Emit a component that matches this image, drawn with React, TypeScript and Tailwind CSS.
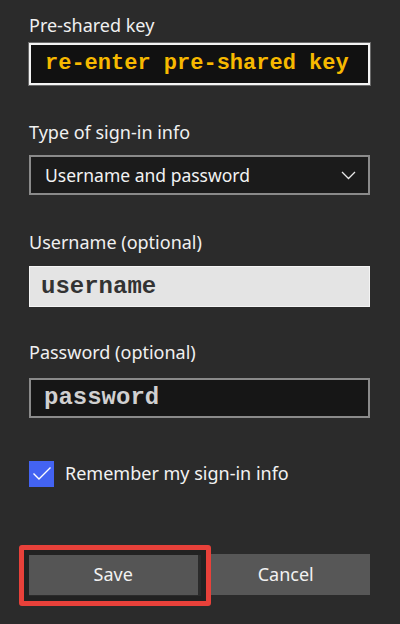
import React from "react";

const sans = { fontFamily: '"Noto Sans", "Open Sans", sans-serif' };
const mono = { fontFamily: '"Liberation Mono", "Courier New", monospace' };

export default function App() {
  return (
    <div className="w-[400px] h-[624px] bg-[#2b2b2b] overflow-hidden" style={sans}>
      <div className="pl-[29px] pr-[30px] pt-[13px] flex flex-col">
        <div className="text-[18px] leading-[24px] text-[#f0f0f0]">Pre-shared key</div>
        <div className="mt-[6px] h-[42px] border-2 border-[#f4f4f4] bg-[#111111] shadow-[0_0_0_1px_#6a6a6a] flex items-center pl-[14px]">
          <span className="text-[22px] font-bold text-[#f7b900] leading-none" style={mono}>
            re-enter pre-shared key
          </span>
        </div>

        <div className="mt-[35px] text-[18px] leading-[24px] text-[#f0f0f0]">Type of sign-in info</div>
        <div className="mt-[11px] h-[40px] border-2 border-[#8a8a8a] bg-[#1b1b1b] flex items-center justify-between pl-[14px] pr-[12px]">
          <span className="text-[17.5px] text-[#f2f2f2]">Username and password</span>
          <svg width="15" height="9" viewBox="0 0 15 9" fill="none">
            <polyline points="1,1 7.5,7.5 14,1" stroke="#e8e8e8" strokeWidth="1.3" />
          </svg>
        </div>

        <div className="mt-[35px] text-[18px] leading-[24px] text-[#f0f0f0]">Username (optional)</div>
        <div className="mt-[12px] h-[41px] border border-[#f4f4f4] bg-[#e4e4e4] flex items-center pl-[11px]">
          <span className="text-[24px] font-bold text-[#333333] leading-none" style={mono}>
            username
          </span>
        </div>

        <div className="mt-[33px] text-[18px] leading-[24px] text-[#f0f0f0]">Password (optional)</div>
        <div className="mt-[14px] h-[40px] border-2 border-[#8a8a8a] bg-[#161616] flex items-center pl-[13px]">
          <span className="text-[24px] font-bold text-[#d0d0d0] leading-none" style={mono}>
            password
          </span>
        </div>

        <div className="mt-[42px] flex items-center gap-[11px]">
          <div className="w-[25px] h-[26px] bg-[#4363f2] flex items-center justify-center">
            <svg width="20" height="15" viewBox="0 0 20 15" fill="none">
              <polyline points="1.5,7.5 7,13 18.5,1.5" stroke="#ffffff" strokeWidth="1.4" />
            </svg>
          </div>
          <span className="text-[18px] text-[#f2f2f2]">Remember my sign-in info</span>
        </div>

        <div className="relative mt-[67px] flex gap-[4px]">
          <div className="flex-1 h-[41px] bg-[#555555] flex items-center justify-center text-[18px] text-[#f2f2f2]">
            Save
          </div>
          <div className="flex-1 h-[41px] bg-[#575757] flex items-center justify-center text-[18px] text-[#f2f2f2]">
            Cancel
          </div>
          <div className="absolute left-[-10px] top-[-9px] w-[192px] h-[61px] border-[5px] border-[#e8413a] rounded-[3px] shadow-[inset_0_0_0_5px_#222222]" />
        </div>
      </div>
    </div>
  );
}
